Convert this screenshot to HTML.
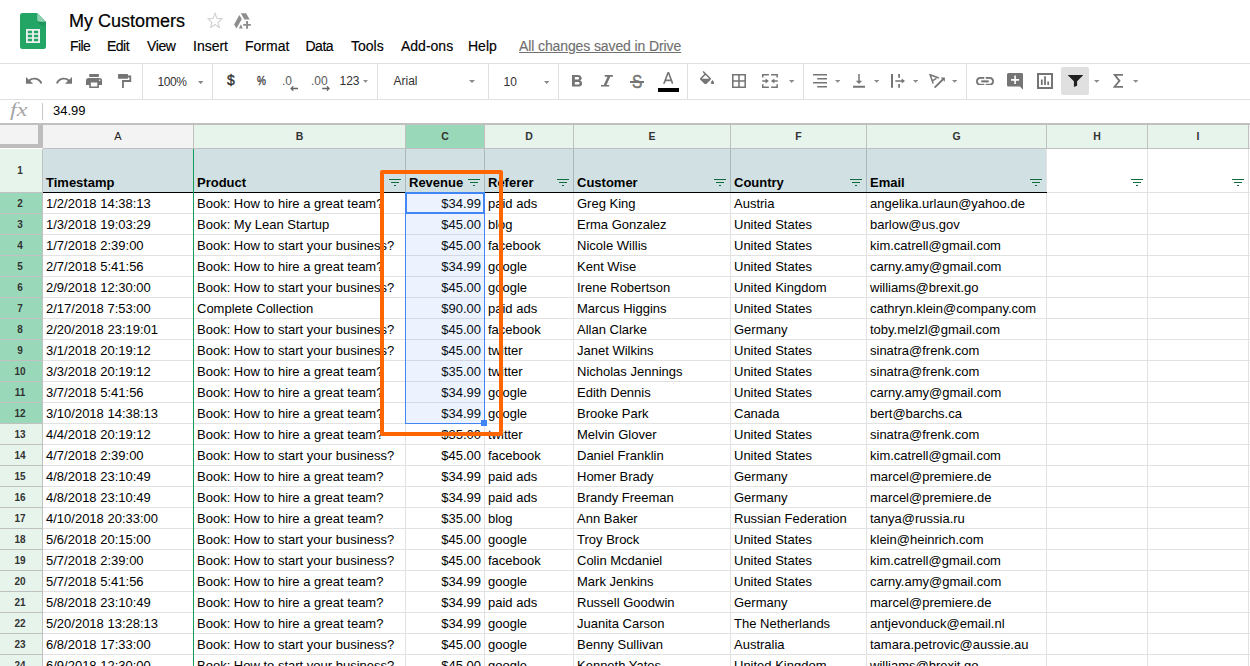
<!DOCTYPE html>
<html lang="en"><head><meta charset="utf-8"><title>My Customers - Google Sheets</title>
<style>
html,body{margin:0;padding:0;background:#fff;}
body{width:1250px;height:666px;overflow:hidden;position:relative;font-family:"Liberation Sans",Arial,sans-serif;color:#000;}
#grid{position:absolute;left:0;top:0;width:1250px;height:666px;overflow:hidden;}
#grid div,#grid svg{position:absolute;}
.topline{left:0;top:123px;width:1250px;height:2px;background:#c0c0c0;}
.ch{top:125px;height:23px;line-height:23px;text-align:center;font-size:10.5px;font-weight:bold;color:#333;}
.rh{left:0;width:40px;padding-right:2px;height:20px;line-height:22px;text-align:center;font-size:10px;font-weight:bold;color:#333;}
.vl{width:1px;}
.hl{height:1px;}
.h{background:#c0c0c0;}
.corner{left:0;top:125px;width:38px;height:19px;background:#f3f3f3;}
.cbar-v{left:38px;top:125px;width:5px;height:23px;background:#bdbdbd;}
.cbar-h{left:0;top:144px;width:43px;height:4px;background:#bdbdbd;}
.hc{top:149px;height:43px;background:#d0e0e3;font-size:13px;font-weight:bold;overflow:hidden;}
.hc span{position:absolute;left:3px;top:26px;line-height:15px;white-space:nowrap;}
.c{height:20px;line-height:15px;font-size:13px;white-space:nowrap;overflow:hidden;box-sizing:border-box;padding:3px 3px 0 3px;}
.c.r{text-align:right;}
.sel{left:405px;top:192px;width:80px;height:232px;box-sizing:border-box;border:1px solid #4285f4;background:rgba(66,133,244,0.10);}
.act{left:405px;top:192px;width:80px;height:22px;box-sizing:border-box;border:2px solid #4285f4;}
.handle{left:481px;top:420px;width:6px;height:6px;background:#4285f4;}
.orange{left:380px;top:170px;width:123px;height:266px;box-sizing:border-box;border:4px solid #ff6600;border-radius:2px;}
#top{position:absolute;left:0;top:0;width:1250px;height:123px;background:#fff;}
.abs{position:absolute;}
.t{position:absolute;white-space:nowrap;}
.title{font-size:18px;line-height:22px;color:#000;-webkit-text-stroke:0.2px #000;}
.m{top:37px;font-size:14px;line-height:18px;color:#000;-webkit-text-stroke:0.15px;}
.saved{color:#707070;text-decoration:underline;}
.ln{background:#e0e0e0;}
.sp{top:64px;width:1px;height:35px;background:#e0e0e0;}
.fx{font-family:"Liberation Serif","DejaVu Serif",serif;font-style:italic;font-size:18px;line-height:20px;color:#a6a6a6;}
.fv{font-size:13px;line-height:15px;color:#000;}
.tb{font-size:12px;line-height:16px;color:#444;}
.ic{fill:#757575;}
.dd{fill:#8a8a8a;}
.dk{color:#333;}
.gy{color:#5a5a5a;}

</style></head>
<body>
<div id="top">
<!-- logo -->
<svg class="abs" style="left:20px;top:13px" width="26" height="36" viewBox="0 0 26 36">
<path d="M2.5 0H17.2L26 8.8V33.5A2.5 2.5 0 0 1 23.500 36H2.5A2.5 2.500 0 0 1 0 33.5V2.500A2.500 2.500 0 0 1 2.500 0Z" fill="#22a565"/>
<path d="M17.2 8.800H26V17L17.2 8.800Z" fill="url(#fs)"/><defs><linearGradient id="fs" x1="0" y1="0" x2="0.700" y2="1"><stop offset="0" stop-color="#198a52"/><stop offset="1" stop-color="#22a565"/></linearGradient></defs>
<path d="M17.2 0L26 8.800H19.700A2.500 2.500 0 0 1 17.200 6.300Z" fill="#8ed1b1"/>
<path d="M6 16H20V30H6Z M7.800 17.800V20.300H12.100V17.800Z M13.900 17.800V20.300H18.200V17.800Z M7.800 21.800V24.300H12.100V21.800Z M13.900 21.800V24.300H18.200V21.800Z M7.800 25.800V28.300H12.100V25.800Z M13.900 25.800V28.300H18.200V25.800Z" fill="#f1f1f1" fill-rule="evenodd"/>
</svg>
<div class="t title" style="left:69px;top:10px">My Customers</div>
<!-- star -->
<svg class="abs" style="left:207px;top:11.700px" width="16" height="16.300" viewBox="0 0 16 15.500" preserveAspectRatio="none"><path fill="none" stroke="#d2d2d2" stroke-width="1.100" stroke-linejoin="miter" d="M8 1.200L9.900 6.100L15 6.400L11 9.700L12.400 14.800L8 11.900L3.600 14.800L5 9.700L1 6.400L6.100 6.100Z"/></svg>
<!-- drive add -->
<svg class="abs" style="left:233px;top:13px" width="19" height="17" viewBox="0 0 19 17"><g fill="#8e8e8e"><path d="M6.400 1.900L8.800 6L3.500 15.600L1.100 11.500Z"/><path d="M7.800 0.200H13.100L16.700 6.400H11.400Z"/><path d="M8 11.200L9.700 15.600H5.900Z"/><path d="M13.100 8.100H15V11H17.900V12.800H15V15.800H13.100V12.800H10.200V11H13.100Z"/></g></svg>
<!-- menus -->
<div class="t m" style="left:70px;letter-spacing:-0.6px">File</div>
<div class="t m" style="left:107px;letter-spacing:-0.5px">Edit</div>
<div class="t m" style="left:147px;letter-spacing:-0.4px">View</div>
<div class="t m" style="left:193px">Insert</div>
<div class="t m" style="left:245px">Format</div>
<div class="t m" style="left:305.500px;letter-spacing:-0.5px">Data</div>
<div class="t m" style="left:351px">Tools</div>
<div class="t m" style="left:401px">Add-ons</div>
<div class="t m" style="left:468px">Help</div>
<div class="t m saved" style="left:519px;letter-spacing:-0.11px">All changes saved in Drive</div>
<!-- toolbar frame -->
<div class="abs ln" style="left:0;top:63px;width:1250px;height:1px"></div>
<div class="abs ln" style="left:0;top:99px;width:1250px;height:1px"></div>
<div class="abs sp" style="left:142px"></div>
<div class="abs sp" style="left:212px"></div>
<div class="abs sp" style="left:377px"></div>
<div class="abs sp" style="left:488px"></div>
<div class="abs sp" style="left:558px"></div>
<div class="abs sp" style="left:687px"></div>
<div class="abs sp" style="left:803px"></div>
<div class="abs sp" style="left:966px"></div>
<!-- undo / redo -->
<svg class="abs ic" style="left:26px;top:77px" width="16" height="7.2" viewBox="2 7 20.100 9.720" preserveAspectRatio="none"><path d="M12.500 8c-2.650 0-5.050.990-6.900 2.600L2 7v9h9l-3.620-3.620c1.390-1.160 3.160-1.880 5.120-1.880 3.540 0 6.550 2.310 7.600 5.500l2.370-.780C21.080 11.030 17.150 8 12.500 8z"/></svg>
<svg class="abs ic" style="left:56.200px;top:77px" width="16" height="7.2" viewBox="1.540 7 20.460 9.720" preserveAspectRatio="none"><path d="M18.400 10.600C16.550 8.990 14.150 8 11.500 8c-4.650 0-8.580 3.030-9.960 7.220L3.900 16c1.050-3.190 4.050-5.500 7.600-5.500 1.950 0 3.730.720 5.120 1.880L13 16h9V7l-3.600 3.600z"/></svg>
<!-- print -->
<svg class="abs ic" style="left:86px;top:74px" width="16.100" height="14" viewBox="2 3 20 18" preserveAspectRatio="none"><path d="M19 8H5c-1.660 0-3 1.340-3 3v6h4v4h12v-4h4v-6c0-1.660-1.340-3-3-3zm-3 11H8v-5h8v5zm3-7c-.550 0-1-.450-1-1s.450-1 1-1 1 .450 1 1-.450 1-1 1zm-1-9H6v4h12V3z"/></svg>
<!-- paint format -->
<svg class="abs ic" style="left:117.900px;top:74px" width="14" height="14.500" viewBox="0 0 14 14.500"><rect x="0" y="0" width="10" height="4.700" rx="0.600"/><path d="M10 2.500H12.300V7H4.950V13.900" fill="none" stroke="#757575" stroke-width="1.800"/></svg>
<!-- zoom -->
<div class="t tb dk" style="left:157.500px;top:73.600px;letter-spacing:-0.45px">100%</div>
<svg class="abs dd" style="left:197.800px;top:81px" width="5.400" height="3.200" viewBox="0 0 10 5" preserveAspectRatio="none"><path d="M0 0h10L5 5z"/></svg>
<!-- number formats -->
<div class="t dk" style="left:227px;top:71px;font-size:14px;line-height:18px;-webkit-text-stroke:0.35px #333">$</div>
<div class="t dk" style="left:256.500px;top:72.600px;font-size:12.500px;line-height:16px;-webkit-text-stroke:0.3px #333;transform:scaleX(0.8);transform-origin:0 0">%</div>
<div class="t tb gy" style="left:282px;top:73px;font-size:12px">.0</div>
<svg class="abs" style="left:290px;top:86.200px" width="8.200" height="5" viewBox="0 0 8.200 5"><path d="M8 2.500H1.200M3.300 0.400L1.100 2.500L3.300 4.600" fill="none" stroke="#666" stroke-width="1.300"/></svg>
<div class="t tb gy" style="left:311px;top:73px;font-size:12px">.00</div>
<svg class="abs" style="left:322px;top:86.200px" width="8.200" height="5" viewBox="0 0 8.200 5"><path d="M0.200 2.500H7M4.900 0.400L7.100 2.500L4.900 4.600" fill="none" stroke="#666" stroke-width="1.300"/></svg>
<div class="t tb dk" style="left:339.500px;top:73px">123</div>
<svg class="abs dd" style="left:363.300px;top:80px" width="5" height="2.800" viewBox="0 0 10 5" preserveAspectRatio="none"><path d="M0 0h10L5 5z"/></svg>
<!-- font -->
<div class="t tb dk" style="left:393.500px;top:73px">Arial</div>
<svg class="abs dd" style="left:469px;top:79.800px" width="6" height="3" viewBox="0 0 10 5" preserveAspectRatio="none"><path d="M0 0h10L5 5z"/></svg>
<div class="t tb dk" style="left:503.500px;top:73.500px">10</div>
<svg class="abs dd" style="left:544px;top:80.500px" width="5.400" height="3" viewBox="0 0 10 5" preserveAspectRatio="none"><path d="M0 0h10L5 5z"/></svg>
<!-- B I S A -->
<svg class="abs ic" style="left:571.600px;top:75.200px" width="10.200" height="11.600" viewBox="7 4 10.750 14" preserveAspectRatio="none"><path d="M15.600 10.790c.970-.670 1.650-1.770 1.650-2.790 0-2.260-1.750-4-4-4H7v14h7.040c2.090 0 3.710-1.700 3.710-3.790 0-1.520-.860-2.820-2.150-3.420zM10 6.500h3c.830 0 1.500.670 1.500 1.500s-.670 1.500-1.500 1.500h-3v-3zm3.500 9H10v-3h3.500c.830 0 1.500.670 1.500 1.500s-.670 1.500-1.500 1.500z"/></svg>
<svg class="abs ic" style="left:601.100px;top:75.200px" width="12" height="11.600" viewBox="0 0 12 11.600"><path d="M3.700 0H11.900V1.700H9.300L5.500 9.900H8.200V11.600H0V9.900H2.700L6.500 1.700H3.700Z"/></svg>
<div class="t" style="left:632px;top:71.900px;font-size:17.500px;line-height:20px;color:#757575;-webkit-text-stroke:0.5px #757575;transform:scaleX(0.88);transform-origin:0 0">S</div><div class="abs" style="left:629.900px;top:81.100px;width:14.100px;height:1.500px;background:#757575"></div>
<svg class="abs ic" style="left:662.800px;top:72.200px" width="10.600" height="11.700" viewBox="5.500 3 13 14" preserveAspectRatio="none"><path d="M11 3L5.500 17h2.250l1.120-3h6.250l1.120 3h2.250L13 3h-2zm-1.380 9L12 5.670 14.380 12H9.620z"/></svg>
<div class="abs" style="left:658px;top:88px;width:21px;height:4px;background:#000"></div>
<!-- fill / borders / merge -->
<svg class="abs ic" style="left:699.900px;top:71px" width="14.100" height="13.300" viewBox="3 0 18 17" preserveAspectRatio="none"><path d="M16.560 8.940L7.620 0 6.210 1.410l2.380 2.380-5.150 5.150c-.590.590-.590 1.540 0 2.120l5.500 5.500c.290.290.680.440 1.060.440s.770-.150 1.060-.440l5.500-5.500c.590-.580.590-1.530 0-2.120zM5.210 10L10 5.210 14.790 10H5.210zM19 11.500s-2 2.170-2 3.500c0 1.100.900 2 2 2s2-.900 2-2c0-1.330-2-3.500-2-3.500z"/></svg>
<svg class="abs ic" style="left:732px;top:74px" width="14" height="14" viewBox="3 3 18 18" preserveAspectRatio="none"><path d="M3 3v18h18V3H3zm8 16H5v-6h6v6zm0-8H5V5h6v6zm8 8h-6v-6h6v6zm0-8h-6V5h6v6z"/></svg>
<svg class="abs ic" style="left:762px;top:74px" width="16" height="14" viewBox="0 0 16 14"><path d="M0 0H6.900V1.500H1.500V3.600H0ZM9.100 0H15.900V3.600H14.400V1.500H9.100ZM0 13.900V10.300H1.500V12.400H6.900V13.900ZM15.900 13.900H9.100V12.400H14.400V10.300H15.900ZM0.200 6.200H3.600V4.500L6.900 6.950L3.600 9.400V7.700H0.200ZM15.700 6.200H12.300V4.500L9 6.950L12.300 9.400V7.700H15.700Z"/></svg>
<svg class="abs dd" style="left:789px;top:80.100px" width="5.300" height="3" viewBox="0 0 10 5" preserveAspectRatio="none"><path d="M0 0h10L5 5z"/></svg>
<!-- align / valign / wrap / rotate -->
<svg class="abs ic" style="left:813px;top:74px" width="14" height="14" viewBox="0 0 14 14"><path d="M0 0H14V1.500H0ZM4.200 4.050H14V5.550H4.200ZM0 8.050H14V9.550H0ZM4.200 12H14V13.500H4.200Z"/></svg>
<svg class="abs dd" style="left:835.100px;top:80.100px" width="5.200" height="2.800" viewBox="0 0 10 5" preserveAspectRatio="none"><path d="M0 0h10L5 5z"/></svg>
<svg class="abs ic" style="left:853px;top:74px" width="12" height="14" viewBox="0 0 12 14"><path d="M5.250 0H6.750V6.700H9.200L6 9.900L2.800 6.700H5.250ZM0 11.800H12V13.800H0Z"/></svg>
<svg class="abs dd" style="left:874.100px;top:80.100px" width="5.200" height="2.800" viewBox="0 0 10 5" preserveAspectRatio="none"><path d="M0 0h10L5 5z"/></svg>
<svg class="abs ic" style="left:891px;top:74px" width="14.200" height="14" viewBox="0 0 14.200 14"><path d="M0 0H2V13.800H0ZM7.200 0H9V3.800H7.200ZM7.200 9.900H9V13.800H7.200ZM4.300 6.200H10.700V4.400L14.100 6.950L10.700 9.500V7.700H4.300Z"/></svg>
<svg class="abs dd" style="left:913.200px;top:80.100px" width="5.200" height="2.800" viewBox="0 0 10 5" preserveAspectRatio="none"><path d="M0 0h10L5 5z"/></svg>
<svg class="abs" style="left:929px;top:73.500px" width="17" height="15" viewBox="0 0 17 15"><path d="M9.900 4L1.100 0.700L4.200 9.600M3.300 6.800L7.400 4.400" fill="none" stroke="#757575" stroke-width="1.500"/><path d="M5.600 13.700L14.300 5" fill="none" stroke="#757575" stroke-width="1.800"/><path d="M11.600 3.500H15.900V7.800Z" fill="#757575"/></svg>
<svg class="abs dd" style="left:952px;top:80.100px" width="5.200" height="2.800" viewBox="0 0 10 5" preserveAspectRatio="none"><path d="M0 0h10L5 5z"/></svg>
<!-- link / comment / chart / filter / sigma -->
<svg class="abs ic" stroke="#757575" stroke-width="0.350" style="left:975.800px;top:76.700px" width="18" height="8.700" viewBox="2 7 20 10" preserveAspectRatio="none"><path d="M3.900 12c0-1.710 1.390-3.100 3.100-3.100h4V7H7c-2.760 0-5 2.240-5 5s2.240 5 5 5h4v-1.900H7c-1.710 0-3.100-1.390-3.100-3.100zM8 13h8v-2H8v2zm9-6h-4v1.900h4c1.710 0 3.100 1.390 3.100 3.100s-1.390 3.100-3.100 3.100h-4V17h4c2.760 0 5-2.240 5-5s-2.240-5-5-5z"/></svg>
<svg class="abs ic" style="left:1006.800px;top:72.900px" width="16.200" height="17" viewBox="2 2 20 20" preserveAspectRatio="none"><path d="M21.990 4c0-1.100-.890-2-1.990-2H4c-1.100 0-2 .900-2 2v12c0 1.100.900 2 2 2h14l4 4-.010-18zM17 11h-4v4h-2v-4H7V9h4V5h2v4h4v2z"/></svg>
<svg class="abs ic" style="left:1037px;top:72.900px" width="16" height="16" viewBox="0 0 16 16"><path d="M0 0H16V16H0ZM2 2V14H14V2Z M3.900 6.600H5.700V12.100H3.900ZM7.100 3.300H8.900V12.100H7.100ZM10.300 8.400H12.100V12.100H10.300Z" fill-rule="evenodd"/></svg>
<div class="abs" style="left:1061px;top:67px;width:28px;height:28px;background:#e0e0e0;border-radius:2px"></div>
<svg class="abs" style="left:1067.500px;top:74.800px" width="15" height="12.200" viewBox="0 0 15 12.200"><path d="M0.300 0H14.700C15 0 15.100 0.300 14.900 0.600L9.100 6.300V10.700L5.900 12V6.300L0.100 0.600C-0.100 0.300 0 0 0.300 0Z" fill="#212121"/></svg>
<svg class="abs dd" style="left:1093.600px;top:80.100px" width="5.300" height="2.800" viewBox="0 0 10 5" preserveAspectRatio="none"><path d="M0 0h10L5 5z"/></svg>
<svg class="abs" style="left:1113px;top:74.100px" width="10.200" height="13.700" viewBox="0 0 10.200 13.700"><path d="M10.100 0.900H1.600L6.500 6.850L1.600 12.800H10.100" fill="none" stroke="#757575" stroke-width="1.800" stroke-linejoin="miter"/></svg>
<svg class="abs dd" style="left:1132.800px;top:80.100px" width="5.400" height="2.800" viewBox="0 0 10 5" preserveAspectRatio="none"><path d="M0 0h10L5 5z"/></svg>

<!-- formula bar -->
<div class="t fx" style="left:9.500px;top:100px;transform:scaleX(1.34);transform-origin:0 0">fx</div>
<div class="abs" style="left:42px;top:103px;width:1px;height:17px;background:#c8c8c8"></div>
<div class="t fv" style="left:53px;top:103px">34.99</div>
</div>

<div id="grid">
<div class="topline"></div>
<div class="ch" style="left:43px;width:150px;background:#f3f3f3;font-weight:normal;color:#222;font-size:11px">A</div>
<div class="vl h" style="left:193px;top:125px;height:24px"></div>
<div class="ch" style="left:194px;width:211px;background:#e6f4ec">B</div>
<div class="vl h" style="left:405px;top:125px;height:24px"></div>
<div class="ch" style="left:406px;width:78px;background:#99d9ba">C</div>
<div class="vl h" style="left:484px;top:125px;height:24px"></div>
<div class="ch" style="left:485px;width:88px;background:#e6f4ec">D</div>
<div class="vl h" style="left:573px;top:125px;height:24px"></div>
<div class="ch" style="left:574px;width:156px;background:#e6f4ec">E</div>
<div class="vl h" style="left:730px;top:125px;height:24px"></div>
<div class="ch" style="left:731px;width:135px;background:#e6f4ec">F</div>
<div class="vl h" style="left:866px;top:125px;height:24px"></div>
<div class="ch" style="left:867px;width:179px;background:#e6f4ec">G</div>
<div class="vl h" style="left:1046px;top:125px;height:24px"></div>
<div class="ch" style="left:1047px;width:100px;background:#e6f4ec">H</div>
<div class="vl h" style="left:1147px;top:125px;height:24px"></div>
<div class="ch" style="left:1148px;width:100px;background:#e6f4ec">I</div>
<div class="vl h" style="left:1248px;top:125px;height:24px"></div>
<div class="ch" style="left:1249px;width:1px;background:#f3f3f3"></div>
<div class="hl h" style="left:43px;top:148px;width:1207px"></div>
<div class="corner"></div><div class="cbar-v"></div><div class="cbar-h"></div>
<div class="rh" style="top:149px;height:43px;line-height:44px;background:#e6f4ec">1</div>
<div class="hl h" style="left:0;top:192px;width:42px"></div>
<div class="hc" style="left:43px;width:150px"><span>Timestamp</span></div>
<div class="hc" style="left:194px;width:211px"><span>Product</span></div>
<div class="vl" style="left:193px;top:149px;height:43px;background:#a9b8ba"></div>
<div class="hc" style="left:406px;width:78px"><span>Revenue</span></div>
<div class="vl" style="left:405px;top:149px;height:43px;background:#a9b8ba"></div>
<div class="hc" style="left:485px;width:88px"><span>Referer</span></div>
<div class="vl" style="left:484px;top:149px;height:43px;background:#a9b8ba"></div>
<div class="hc" style="left:574px;width:156px"><span>Customer</span></div>
<div class="vl" style="left:573px;top:149px;height:43px;background:#a9b8ba"></div>
<div class="hc" style="left:731px;width:135px"><span>Country</span></div>
<div class="vl" style="left:730px;top:149px;height:43px;background:#a9b8ba"></div>
<div class="hc" style="left:867px;width:179px"><span>Email</span></div>
<div class="vl" style="left:866px;top:149px;height:43px;background:#a9b8ba"></div>
<div class="vl" style="left:1147px;top:149px;height:43px;background:#e2e2e2"></div>
<div class="vl" style="left:1248px;top:149px;height:43px;background:#e2e2e2"></div>
<div class="vl" style="left:1046px;top:149px;height:43px;background:#e2e2e2"></div>
<div class="hl" style="left:1047px;top:192px;width:203px;background:#e2e2e2"></div>
<div class="hl" style="left:43px;top:192px;width:1004px;background:#000"></div>
<svg class="fi" style="left:389px;top:178px" width="12" height="9" viewBox="0 0 12 9" shape-rendering="crispEdges"><path d="M0 1h12v1H0zM2 4h8v1H2zM5 7h2v1H5z" fill="#0f6d3b"/></svg>
<svg class="fi" style="left:468px;top:178px" width="12" height="9" viewBox="0 0 12 9" shape-rendering="crispEdges"><path d="M0 1h12v1H0zM2 4h8v1H2zM5 7h2v1H5z" fill="#0f6d3b"/></svg>
<svg class="fi" style="left:557px;top:178px" width="12" height="9" viewBox="0 0 12 9" shape-rendering="crispEdges"><path d="M0 1h12v1H0zM2 4h8v1H2zM5 7h2v1H5z" fill="#0f6d3b"/></svg>
<svg class="fi" style="left:714px;top:178px" width="12" height="9" viewBox="0 0 12 9" shape-rendering="crispEdges"><path d="M0 1h12v1H0zM2 4h8v1H2zM5 7h2v1H5z" fill="#0f6d3b"/></svg>
<svg class="fi" style="left:850px;top:178px" width="12" height="9" viewBox="0 0 12 9" shape-rendering="crispEdges"><path d="M0 1h12v1H0zM2 4h8v1H2zM5 7h2v1H5z" fill="#0f6d3b"/></svg>
<svg class="fi" style="left:1030px;top:178px" width="12" height="9" viewBox="0 0 12 9" shape-rendering="crispEdges"><path d="M0 1h12v1H0zM2 4h8v1H2zM5 7h2v1H5z" fill="#0f6d3b"/></svg>
<svg class="fi" style="left:1131px;top:178px" width="12" height="9" viewBox="0 0 12 9" shape-rendering="crispEdges"><path d="M0 1h12v1H0zM2 4h8v1H2zM5 7h2v1H5z" fill="#0f6d3b"/></svg>
<svg class="fi" style="left:1232px;top:178px" width="12" height="9" viewBox="0 0 12 9" shape-rendering="crispEdges"><path d="M0 1h12v1H0zM2 4h8v1H2zM5 7h2v1H5z" fill="#0f6d3b"/></svg>
<div class="rh" style="top:193px;background:#99d9ba">2</div>
<div class="hl h" style="left:0;top:213px;width:42px"></div>
<div class="hl" style="left:43px;top:213px;width:1207px;background:#e2e2e2"></div>
<div class="c" style="left:43px;top:193px;width:150px">1/2/2018 14:38:13</div>
<div class="c" style="left:194px;top:193px;width:211px">Book: How to hire a great team?</div>
<div class="c r" style="left:406px;top:193px;width:78px">$34.99</div>
<div class="c" style="left:485px;top:193px;width:88px">paid ads</div>
<div class="c" style="left:574px;top:193px;width:156px">Greg King</div>
<div class="c" style="left:731px;top:193px;width:135px">Austria</div>
<div class="c" style="left:867px;top:193px;width:179px">angelika.urlaun@yahoo.de</div>
<div class="rh" style="top:214px;background:#99d9ba">3</div>
<div class="hl h" style="left:0;top:234px;width:42px"></div>
<div class="hl" style="left:43px;top:234px;width:1207px;background:#e2e2e2"></div>
<div class="c" style="left:43px;top:214px;width:150px">1/3/2018 19:03:29</div>
<div class="c" style="left:194px;top:214px;width:211px">Book: My Lean Startup</div>
<div class="c r" style="left:406px;top:214px;width:78px">$45.00</div>
<div class="c" style="left:485px;top:214px;width:88px">blog</div>
<div class="c" style="left:574px;top:214px;width:156px">Erma Gonzalez</div>
<div class="c" style="left:731px;top:214px;width:135px">United States</div>
<div class="c" style="left:867px;top:214px;width:179px">barlow@us.gov</div>
<div class="rh" style="top:235px;background:#99d9ba">4</div>
<div class="hl h" style="left:0;top:255px;width:42px"></div>
<div class="hl" style="left:43px;top:255px;width:1207px;background:#e2e2e2"></div>
<div class="c" style="left:43px;top:235px;width:150px">1/7/2018 2:39:00</div>
<div class="c" style="left:194px;top:235px;width:211px">Book: How to start your business?</div>
<div class="c r" style="left:406px;top:235px;width:78px">$45.00</div>
<div class="c" style="left:485px;top:235px;width:88px">facebook</div>
<div class="c" style="left:574px;top:235px;width:156px">Nicole Willis</div>
<div class="c" style="left:731px;top:235px;width:135px">United States</div>
<div class="c" style="left:867px;top:235px;width:179px">kim.catrell@gmail.com</div>
<div class="rh" style="top:256px;background:#99d9ba">5</div>
<div class="hl h" style="left:0;top:276px;width:42px"></div>
<div class="hl" style="left:43px;top:276px;width:1207px;background:#e2e2e2"></div>
<div class="c" style="left:43px;top:256px;width:150px">2/7/2018 5:41:56</div>
<div class="c" style="left:194px;top:256px;width:211px">Book: How to hire a great team?</div>
<div class="c r" style="left:406px;top:256px;width:78px">$34.99</div>
<div class="c" style="left:485px;top:256px;width:88px">google</div>
<div class="c" style="left:574px;top:256px;width:156px">Kent Wise</div>
<div class="c" style="left:731px;top:256px;width:135px">United States</div>
<div class="c" style="left:867px;top:256px;width:179px">carny.amy@gmail.com</div>
<div class="rh" style="top:277px;background:#99d9ba">6</div>
<div class="hl h" style="left:0;top:297px;width:42px"></div>
<div class="hl" style="left:43px;top:297px;width:1207px;background:#e2e2e2"></div>
<div class="c" style="left:43px;top:277px;width:150px">2/9/2018 12:30:00</div>
<div class="c" style="left:194px;top:277px;width:211px">Book: How to start your business?</div>
<div class="c r" style="left:406px;top:277px;width:78px">$45.00</div>
<div class="c" style="left:485px;top:277px;width:88px">google</div>
<div class="c" style="left:574px;top:277px;width:156px">Irene Robertson</div>
<div class="c" style="left:731px;top:277px;width:135px">United Kingdom</div>
<div class="c" style="left:867px;top:277px;width:179px">williams@brexit.go</div>
<div class="rh" style="top:298px;background:#99d9ba">7</div>
<div class="hl h" style="left:0;top:318px;width:42px"></div>
<div class="hl" style="left:43px;top:318px;width:1207px;background:#e2e2e2"></div>
<div class="c" style="left:43px;top:298px;width:150px">2/17/2018 7:53:00</div>
<div class="c" style="left:194px;top:298px;width:211px">Complete Collection</div>
<div class="c r" style="left:406px;top:298px;width:78px">$90.00</div>
<div class="c" style="left:485px;top:298px;width:88px">paid ads</div>
<div class="c" style="left:574px;top:298px;width:156px">Marcus Higgins</div>
<div class="c" style="left:731px;top:298px;width:135px">United States</div>
<div class="c" style="left:867px;top:298px;width:179px">cathryn.klein@company.com</div>
<div class="rh" style="top:319px;background:#99d9ba">8</div>
<div class="hl h" style="left:0;top:339px;width:42px"></div>
<div class="hl" style="left:43px;top:339px;width:1207px;background:#e2e2e2"></div>
<div class="c" style="left:43px;top:319px;width:150px">2/20/2018 23:19:01</div>
<div class="c" style="left:194px;top:319px;width:211px">Book: How to start your business?</div>
<div class="c r" style="left:406px;top:319px;width:78px">$45.00</div>
<div class="c" style="left:485px;top:319px;width:88px">facebook</div>
<div class="c" style="left:574px;top:319px;width:156px">Allan Clarke</div>
<div class="c" style="left:731px;top:319px;width:135px">Germany</div>
<div class="c" style="left:867px;top:319px;width:179px">toby.melzl@gmail.com</div>
<div class="rh" style="top:340px;background:#99d9ba">9</div>
<div class="hl h" style="left:0;top:360px;width:42px"></div>
<div class="hl" style="left:43px;top:360px;width:1207px;background:#e2e2e2"></div>
<div class="c" style="left:43px;top:340px;width:150px">3/1/2018 20:19:12</div>
<div class="c" style="left:194px;top:340px;width:211px">Book: How to start your business?</div>
<div class="c r" style="left:406px;top:340px;width:78px">$45.00</div>
<div class="c" style="left:485px;top:340px;width:88px">twitter</div>
<div class="c" style="left:574px;top:340px;width:156px">Janet Wilkins</div>
<div class="c" style="left:731px;top:340px;width:135px">United States</div>
<div class="c" style="left:867px;top:340px;width:179px">sinatra@frenk.com</div>
<div class="rh" style="top:361px;background:#99d9ba">10</div>
<div class="hl h" style="left:0;top:381px;width:42px"></div>
<div class="hl" style="left:43px;top:381px;width:1207px;background:#e2e2e2"></div>
<div class="c" style="left:43px;top:361px;width:150px">3/3/2018 20:19:12</div>
<div class="c" style="left:194px;top:361px;width:211px">Book: How to hire a great team?</div>
<div class="c r" style="left:406px;top:361px;width:78px">$35.00</div>
<div class="c" style="left:485px;top:361px;width:88px">twitter</div>
<div class="c" style="left:574px;top:361px;width:156px">Nicholas Jennings</div>
<div class="c" style="left:731px;top:361px;width:135px">United States</div>
<div class="c" style="left:867px;top:361px;width:179px">sinatra@frenk.com</div>
<div class="rh" style="top:382px;background:#99d9ba">11</div>
<div class="hl h" style="left:0;top:402px;width:42px"></div>
<div class="hl" style="left:43px;top:402px;width:1207px;background:#e2e2e2"></div>
<div class="c" style="left:43px;top:382px;width:150px">3/7/2018 5:41:56</div>
<div class="c" style="left:194px;top:382px;width:211px">Book: How to hire a great team?</div>
<div class="c r" style="left:406px;top:382px;width:78px">$34.99</div>
<div class="c" style="left:485px;top:382px;width:88px">google</div>
<div class="c" style="left:574px;top:382px;width:156px">Edith Dennis</div>
<div class="c" style="left:731px;top:382px;width:135px">United States</div>
<div class="c" style="left:867px;top:382px;width:179px">carny.amy@gmail.com</div>
<div class="rh" style="top:403px;background:#99d9ba">12</div>
<div class="hl h" style="left:0;top:423px;width:42px"></div>
<div class="hl" style="left:43px;top:423px;width:1207px;background:#e2e2e2"></div>
<div class="c" style="left:43px;top:403px;width:150px">3/10/2018 14:38:13</div>
<div class="c" style="left:194px;top:403px;width:211px">Book: How to hire a great team?</div>
<div class="c r" style="left:406px;top:403px;width:78px">$34.99</div>
<div class="c" style="left:485px;top:403px;width:88px">google</div>
<div class="c" style="left:574px;top:403px;width:156px">Brooke Park</div>
<div class="c" style="left:731px;top:403px;width:135px">Canada</div>
<div class="c" style="left:867px;top:403px;width:179px">bert@barchs.ca</div>
<div class="rh" style="top:424px;background:#e6f4ec">13</div>
<div class="hl h" style="left:0;top:444px;width:42px"></div>
<div class="hl" style="left:43px;top:444px;width:1207px;background:#e2e2e2"></div>
<div class="c" style="left:43px;top:424px;width:150px">4/4/2018 20:19:12</div>
<div class="c" style="left:194px;top:424px;width:211px">Book: How to hire a great team?</div>
<div class="c r" style="left:406px;top:424px;width:78px">$35.00</div>
<div class="c" style="left:485px;top:424px;width:88px">twitter</div>
<div class="c" style="left:574px;top:424px;width:156px">Melvin Glover</div>
<div class="c" style="left:731px;top:424px;width:135px">United States</div>
<div class="c" style="left:867px;top:424px;width:179px">sinatra@frenk.com</div>
<div class="rh" style="top:445px;background:#e6f4ec">14</div>
<div class="hl h" style="left:0;top:465px;width:42px"></div>
<div class="hl" style="left:43px;top:465px;width:1207px;background:#e2e2e2"></div>
<div class="c" style="left:43px;top:445px;width:150px">4/7/2018 2:39:00</div>
<div class="c" style="left:194px;top:445px;width:211px">Book: How to start your business?</div>
<div class="c r" style="left:406px;top:445px;width:78px">$45.00</div>
<div class="c" style="left:485px;top:445px;width:88px">facebook</div>
<div class="c" style="left:574px;top:445px;width:156px">Daniel Franklin</div>
<div class="c" style="left:731px;top:445px;width:135px">United States</div>
<div class="c" style="left:867px;top:445px;width:179px">kim.catrell@gmail.com</div>
<div class="rh" style="top:466px;background:#e6f4ec">15</div>
<div class="hl h" style="left:0;top:486px;width:42px"></div>
<div class="hl" style="left:43px;top:486px;width:1207px;background:#e2e2e2"></div>
<div class="c" style="left:43px;top:466px;width:150px">4/8/2018 23:10:49</div>
<div class="c" style="left:194px;top:466px;width:211px">Book: How to hire a great team?</div>
<div class="c r" style="left:406px;top:466px;width:78px">$34.99</div>
<div class="c" style="left:485px;top:466px;width:88px">paid ads</div>
<div class="c" style="left:574px;top:466px;width:156px">Homer Brady</div>
<div class="c" style="left:731px;top:466px;width:135px">Germany</div>
<div class="c" style="left:867px;top:466px;width:179px">marcel@premiere.de</div>
<div class="rh" style="top:487px;background:#e6f4ec">16</div>
<div class="hl h" style="left:0;top:507px;width:42px"></div>
<div class="hl" style="left:43px;top:507px;width:1207px;background:#e2e2e2"></div>
<div class="c" style="left:43px;top:487px;width:150px">4/8/2018 23:10:49</div>
<div class="c" style="left:194px;top:487px;width:211px">Book: How to hire a great team?</div>
<div class="c r" style="left:406px;top:487px;width:78px">$34.99</div>
<div class="c" style="left:485px;top:487px;width:88px">paid ads</div>
<div class="c" style="left:574px;top:487px;width:156px">Brandy Freeman</div>
<div class="c" style="left:731px;top:487px;width:135px">Germany</div>
<div class="c" style="left:867px;top:487px;width:179px">marcel@premiere.de</div>
<div class="rh" style="top:508px;background:#e6f4ec">17</div>
<div class="hl h" style="left:0;top:528px;width:42px"></div>
<div class="hl" style="left:43px;top:528px;width:1207px;background:#e2e2e2"></div>
<div class="c" style="left:43px;top:508px;width:150px">4/10/2018 20:33:00</div>
<div class="c" style="left:194px;top:508px;width:211px">Book: How to hire a great team?</div>
<div class="c r" style="left:406px;top:508px;width:78px">$35.00</div>
<div class="c" style="left:485px;top:508px;width:88px">blog</div>
<div class="c" style="left:574px;top:508px;width:156px">Ann Baker</div>
<div class="c" style="left:731px;top:508px;width:135px">Russian Federation</div>
<div class="c" style="left:867px;top:508px;width:179px">tanya@russia.ru</div>
<div class="rh" style="top:529px;background:#e6f4ec">18</div>
<div class="hl h" style="left:0;top:549px;width:42px"></div>
<div class="hl" style="left:43px;top:549px;width:1207px;background:#e2e2e2"></div>
<div class="c" style="left:43px;top:529px;width:150px">5/6/2018 20:15:00</div>
<div class="c" style="left:194px;top:529px;width:211px">Book: How to start your business?</div>
<div class="c r" style="left:406px;top:529px;width:78px">$45.00</div>
<div class="c" style="left:485px;top:529px;width:88px">google</div>
<div class="c" style="left:574px;top:529px;width:156px">Troy Brock</div>
<div class="c" style="left:731px;top:529px;width:135px">United States</div>
<div class="c" style="left:867px;top:529px;width:179px">klein@heinrich.com</div>
<div class="rh" style="top:550px;background:#e6f4ec">19</div>
<div class="hl h" style="left:0;top:570px;width:42px"></div>
<div class="hl" style="left:43px;top:570px;width:1207px;background:#e2e2e2"></div>
<div class="c" style="left:43px;top:550px;width:150px">5/7/2018 2:39:00</div>
<div class="c" style="left:194px;top:550px;width:211px">Book: How to start your business?</div>
<div class="c r" style="left:406px;top:550px;width:78px">$45.00</div>
<div class="c" style="left:485px;top:550px;width:88px">facebook</div>
<div class="c" style="left:574px;top:550px;width:156px">Colin Mcdaniel</div>
<div class="c" style="left:731px;top:550px;width:135px">United States</div>
<div class="c" style="left:867px;top:550px;width:179px">kim.catrell@gmail.com</div>
<div class="rh" style="top:571px;background:#e6f4ec">20</div>
<div class="hl h" style="left:0;top:591px;width:42px"></div>
<div class="hl" style="left:43px;top:591px;width:1207px;background:#e2e2e2"></div>
<div class="c" style="left:43px;top:571px;width:150px">5/7/2018 5:41:56</div>
<div class="c" style="left:194px;top:571px;width:211px">Book: How to hire a great team?</div>
<div class="c r" style="left:406px;top:571px;width:78px">$34.99</div>
<div class="c" style="left:485px;top:571px;width:88px">google</div>
<div class="c" style="left:574px;top:571px;width:156px">Mark Jenkins</div>
<div class="c" style="left:731px;top:571px;width:135px">United States</div>
<div class="c" style="left:867px;top:571px;width:179px">carny.amy@gmail.com</div>
<div class="rh" style="top:592px;background:#e6f4ec">21</div>
<div class="hl h" style="left:0;top:612px;width:42px"></div>
<div class="hl" style="left:43px;top:612px;width:1207px;background:#e2e2e2"></div>
<div class="c" style="left:43px;top:592px;width:150px">5/8/2018 23:10:49</div>
<div class="c" style="left:194px;top:592px;width:211px">Book: How to hire a great team?</div>
<div class="c r" style="left:406px;top:592px;width:78px">$34.99</div>
<div class="c" style="left:485px;top:592px;width:88px">paid ads</div>
<div class="c" style="left:574px;top:592px;width:156px">Russell Goodwin</div>
<div class="c" style="left:731px;top:592px;width:135px">Germany</div>
<div class="c" style="left:867px;top:592px;width:179px">marcel@premiere.de</div>
<div class="rh" style="top:613px;background:#e6f4ec">22</div>
<div class="hl h" style="left:0;top:633px;width:42px"></div>
<div class="hl" style="left:43px;top:633px;width:1207px;background:#e2e2e2"></div>
<div class="c" style="left:43px;top:613px;width:150px">5/20/2018 13:28:13</div>
<div class="c" style="left:194px;top:613px;width:211px">Book: How to hire a great team?</div>
<div class="c r" style="left:406px;top:613px;width:78px">$34.99</div>
<div class="c" style="left:485px;top:613px;width:88px">google</div>
<div class="c" style="left:574px;top:613px;width:156px">Juanita Carson</div>
<div class="c" style="left:731px;top:613px;width:135px">The Netherlands</div>
<div class="c" style="left:867px;top:613px;width:179px">antjevonduck@email.nl</div>
<div class="rh" style="top:634px;background:#e6f4ec">23</div>
<div class="hl h" style="left:0;top:654px;width:42px"></div>
<div class="hl" style="left:43px;top:654px;width:1207px;background:#e2e2e2"></div>
<div class="c" style="left:43px;top:634px;width:150px">6/8/2018 17:33:00</div>
<div class="c" style="left:194px;top:634px;width:211px">Book: How to start your business?</div>
<div class="c r" style="left:406px;top:634px;width:78px">$45.00</div>
<div class="c" style="left:485px;top:634px;width:88px">google</div>
<div class="c" style="left:574px;top:634px;width:156px">Benny Sullivan</div>
<div class="c" style="left:731px;top:634px;width:135px">Australia</div>
<div class="c" style="left:867px;top:634px;width:179px">tamara.petrovic@aussie.au</div>
<div class="rh" style="top:655px;background:#e6f4ec">24</div>
<div class="hl h" style="left:0;top:675px;width:42px"></div>
<div class="hl" style="left:43px;top:675px;width:1207px;background:#e2e2e2"></div>
<div class="c" style="left:43px;top:655px;width:150px">6/9/2018 12:30:00</div>
<div class="c" style="left:194px;top:655px;width:211px">Book: How to start your business?</div>
<div class="c r" style="left:406px;top:655px;width:78px">$45.00</div>
<div class="c" style="left:485px;top:655px;width:88px">google</div>
<div class="c" style="left:574px;top:655px;width:156px">Kenneth Yates</div>
<div class="c" style="left:731px;top:655px;width:135px">United Kingdom</div>
<div class="c" style="left:867px;top:655px;width:179px">williams@brexit.go</div>
<div class="vl" style="left:193px;top:193px;height:473px;background:#e2e2e2"></div>
<div class="vl" style="left:405px;top:193px;height:473px;background:#e2e2e2"></div>
<div class="vl" style="left:484px;top:193px;height:473px;background:#e2e2e2"></div>
<div class="vl" style="left:573px;top:193px;height:473px;background:#e2e2e2"></div>
<div class="vl" style="left:730px;top:193px;height:473px;background:#e2e2e2"></div>
<div class="vl" style="left:866px;top:193px;height:473px;background:#e2e2e2"></div>
<div class="vl" style="left:1046px;top:193px;height:473px;background:#e2e2e2"></div>
<div class="vl" style="left:1147px;top:193px;height:473px;background:#e2e2e2"></div>
<div class="vl" style="left:1248px;top:193px;height:473px;background:#e2e2e2"></div>
<div class="vl h" style="left:42px;top:149px;height:517px"></div>
<div class="vl" style="left:193px;top:149px;height:517px;background:#0f9d58"></div>
<div class="sel"></div><div class="act"></div><div class="handle"></div>
<div class="orange"></div>
</div>
</body></html>
